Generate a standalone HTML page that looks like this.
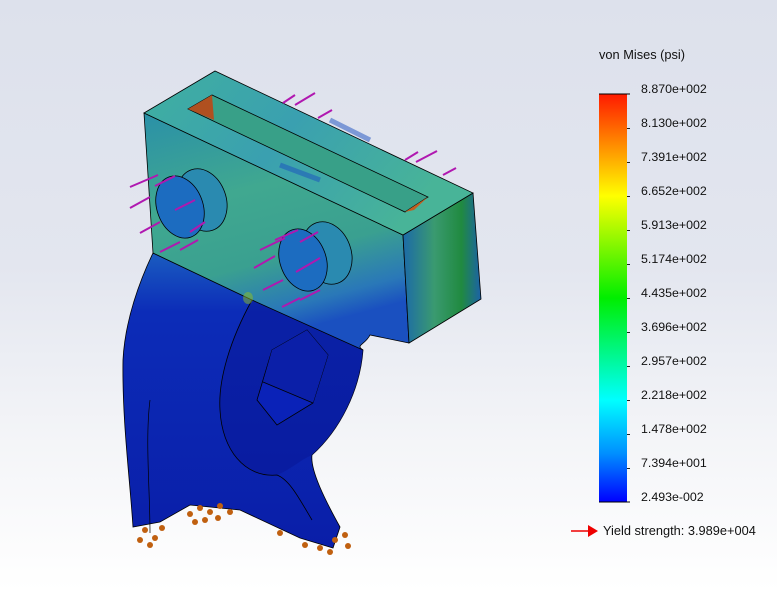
<!DOCTYPE html>
<html><head><style>
html,body{margin:0;padding:0}
body{width:777px;height:591px;overflow:hidden;background:linear-gradient(180deg,#dde1ec 0%,#e3e6ef 45%,#f4f5f8 75%,#ffffff 100%);font-family:"Liberation Sans",sans-serif;position:relative}
.lbl{position:absolute;left:641px;font-size:12.4px;color:#111;line-height:14px}
.tk{position:absolute;left:627px;width:3px;height:1px;background:#222}
</style></head><body>
<svg width="777" height="591" style="position:absolute;left:0;top:0">
<defs>
<linearGradient id="lower" x1="0" y1="0" x2="0" y2="1">
<stop offset="0" stop-color="#1a5cc0"/><stop offset="0.2" stop-color="#0c2cb8"/><stop offset="1" stop-color="#0a1ea8"/></linearGradient>
<linearGradient id="front" x1="0" y1="0" x2="0.3" y2="1">
<stop offset="0" stop-color="#2a90a8"/><stop offset="0.4" stop-color="#40a890"/><stop offset="0.7" stop-color="#3aa090"/><stop offset="0.9" stop-color="#2a78b8"/><stop offset="1" stop-color="#1a50c0"/></linearGradient>
<linearGradient id="right" x1="0" y1="0" x2="1" y2="0">
<stop offset="0" stop-color="#1c6aa8"/><stop offset="0.4" stop-color="#3a9a70"/><stop offset="0.75" stop-color="#208a40"/><stop offset="1" stop-color="#1c62a8"/></linearGradient>
<linearGradient id="top" x1="0" y1="0" x2="1" y2="0.4">
<stop offset="0" stop-color="#40b0a0"/><stop offset="0.5" stop-color="#3aa0b0"/><stop offset="1" stop-color="#48b498"/></linearGradient>
</defs>
<path d="M153,253 C140,280 125,320 123,360 C122,420 130,480 133,527 L160,522 L190,505 L240,510 L300,538 L333,548 L340,527 C325,500 310,470 312,455 C340,430 360,390 363,350 L340,335 L252,300 Z" fill="url(#lower)" stroke="#000" stroke-width="0.8"/>
<path d="M150,400 C145,440 150,490 150,533" fill="none" stroke="#000" stroke-width="0.7"/>
<path d="M252,300 L363,350 C360,390 340,430 312,455 C300,460 290,470 277,475 C245,478 222,450 220,410 C218,380 230,340 252,300Z" fill="#0a1898" opacity="0.55"/>
<path d="M252,300 C230,340 218,380 220,410 C222,450 245,478 277,475 C290,480 300,500 312,520" fill="none" stroke="#000" stroke-width="0.8"/>
<polygon points="257,400 272,350 307,330 328,355 313,403 277,425" fill="#0a22b8" stroke="#000" stroke-width="0.8"/>
<polygon points="272,350 307,330 328,355 313,403 263,382" fill="#0b1fa8"/>
<line x1="263" y1="382" x2="313" y2="403" stroke="#000" stroke-width="0.8"/>
<path d="M144,113 L403,235 L409,343 L370,335 C365,345 355,345 363,350 L252,300 L153,253 C150,200 146,150 144,113Z" fill="url(#front)" stroke="#000" stroke-width="0.8"/>
<polygon points="403,235 473,193 481,299 409,343" fill="url(#right)" stroke="#000" stroke-width="0.8"/>
<polygon points="144,113 215,71 473,193 403,235" fill="url(#top)" stroke="#000" stroke-width="0.8"/>
<polygon points="188,109 212,95 428,197 405,212" fill="#38a088" stroke="#000" stroke-width="0.8"/>
<polygon points="188,109 212,95 214,120" fill="#b05020"/>
<polygon points="405,212 428,197 414,210" fill="#c06020"/>
<path d="M330,120 L370,140" stroke="#1a50c0" stroke-width="5" opacity="0.5"/>
<path d="M280,165 L320,180" stroke="#1a50c0" stroke-width="5" opacity="0.5"/>
<g stroke="#000" stroke-width="0.8">
<ellipse cx="202" cy="200" rx="24" ry="32" transform="rotate(-20 202 200)" fill="#2a8ab0"/>
<ellipse cx="180" cy="207" rx="23" ry="32" transform="rotate(-20 180 207)" fill="#1c6cc0"/>
<ellipse cx="327" cy="253" rx="24" ry="32" transform="rotate(-20 327 253)" fill="#2a8ab0"/>
<ellipse cx="303" cy="260" rx="23" ry="32" transform="rotate(-20 303 260)" fill="#1c6cc0"/>
</g>
<ellipse cx="248" cy="298" rx="5" ry="6" fill="#90c020" opacity="0.5"/>
<g stroke="#b018b0" stroke-width="2" fill="#b018b0">
<line x1="130" y1="187" x2="158" y2="175"/><line x1="130" y1="208" x2="150" y2="197"/><line x1="140" y1="233" x2="160" y2="222"/>
<line x1="155" y1="186" x2="175" y2="176"/><line x1="175" y1="210" x2="195" y2="200"/><line x1="160" y1="252" x2="180" y2="242"/>
<line x1="180" y1="250" x2="198" y2="240"/><line x1="190" y1="232" x2="205" y2="222"/>
<line x1="260" y1="250" x2="285" y2="238"/><line x1="254" y1="268" x2="275" y2="256"/><line x1="263" y1="290" x2="283" y2="280"/>
<line x1="282" y1="307" x2="300" y2="298"/><line x1="300" y1="300" x2="320" y2="290"/><line x1="296" y1="272" x2="320" y2="258"/>
<line x1="275" y1="240" x2="298" y2="230"/><line x1="300" y1="242" x2="318" y2="232"/>
<line x1="283" y1="103" x2="295" y2="95"/><line x1="295" y1="105" x2="315" y2="93"/><line x1="318" y1="118" x2="332" y2="110"/>
<line x1="405" y1="160" x2="418" y2="152"/><line x1="416" y1="162" x2="437" y2="151"/><line x1="443" y1="175" x2="456" y2="168"/>
</g>
<g fill="#c06010">
<circle cx="145" cy="530" r="3"/><circle cx="155" cy="538" r="3"/><circle cx="162" cy="528" r="3"/><circle cx="150" cy="545" r="3"/><circle cx="140" cy="540" r="3"/>
<circle cx="190" cy="514" r="3"/><circle cx="200" cy="508" r="3"/><circle cx="210" cy="512" r="3"/><circle cx="220" cy="506" r="3"/><circle cx="230" cy="512" r="3"/><circle cx="205" cy="520" r="3"/><circle cx="218" cy="518" r="3"/><circle cx="195" cy="522" r="3"/>
<circle cx="280" cy="533" r="3"/><circle cx="305" cy="545" r="3"/><circle cx="320" cy="548" r="3"/><circle cx="335" cy="540" r="3"/><circle cx="345" cy="535" r="3"/><circle cx="330" cy="552" r="3"/><circle cx="348" cy="546" r="3"/>
</g>
<defs><linearGradient id="leg" x1="0" y1="0" x2="0" y2="1">
<stop offset="0" stop-color="#ff1a00"/><stop offset="0.25" stop-color="#ffff00"/><stop offset="0.5" stop-color="#00ee00"/><stop offset="0.75" stop-color="#00ffff"/><stop offset="0.88" stop-color="#0090ff"/><stop offset="1" stop-color="#0000ff"/></linearGradient></defs>
<rect x="599" y="94" width="28" height="408" fill="url(#leg)"/>
<line x1="599" y1="94" x2="630" y2="94" stroke="#000"/>
<line x1="599" y1="502" x2="630" y2="502" stroke="#000"/>
<line x1="571" y1="531" x2="592" y2="531" stroke="#e00" stroke-width="1.5"/>
<polygon points="588,525 598,531 588,537" fill="#e00"/>
</svg>
<div class="lbl" style="left:599px;top:48px;font-size:12.8px">von Mises (psi)</div>
<div class="lbl" style="top:82px">8.870e+002</div>
<div class="lbl" style="top:116px">8.130e+002</div>
<div class="lbl" style="top:150px">7.391e+002</div>
<div class="lbl" style="top:184px">6.652e+002</div>
<div class="lbl" style="top:218px">5.913e+002</div>
<div class="lbl" style="top:252px">5.174e+002</div>
<div class="lbl" style="top:286px">4.435e+002</div>
<div class="lbl" style="top:320px">3.696e+002</div>
<div class="lbl" style="top:354px">2.957e+002</div>
<div class="lbl" style="top:388px">2.218e+002</div>
<div class="lbl" style="top:422px">1.478e+002</div>
<div class="lbl" style="top:456px">7.394e+001</div>
<div class="lbl" style="top:490px">2.493e-002</div>
<div class="tk" style="top:128px"></div><div class="tk" style="top:162px"></div><div class="tk" style="top:196px"></div><div class="tk" style="top:230px"></div><div class="tk" style="top:264px"></div><div class="tk" style="top:298px"></div><div class="tk" style="top:332px"></div><div class="tk" style="top:366px"></div><div class="tk" style="top:400px"></div><div class="tk" style="top:434px"></div><div class="tk" style="top:468px"></div>
<div class="lbl" style="left:603px;top:524px;font-size:12.8px">Yield strength: 3.989e+004</div>
</body></html>
